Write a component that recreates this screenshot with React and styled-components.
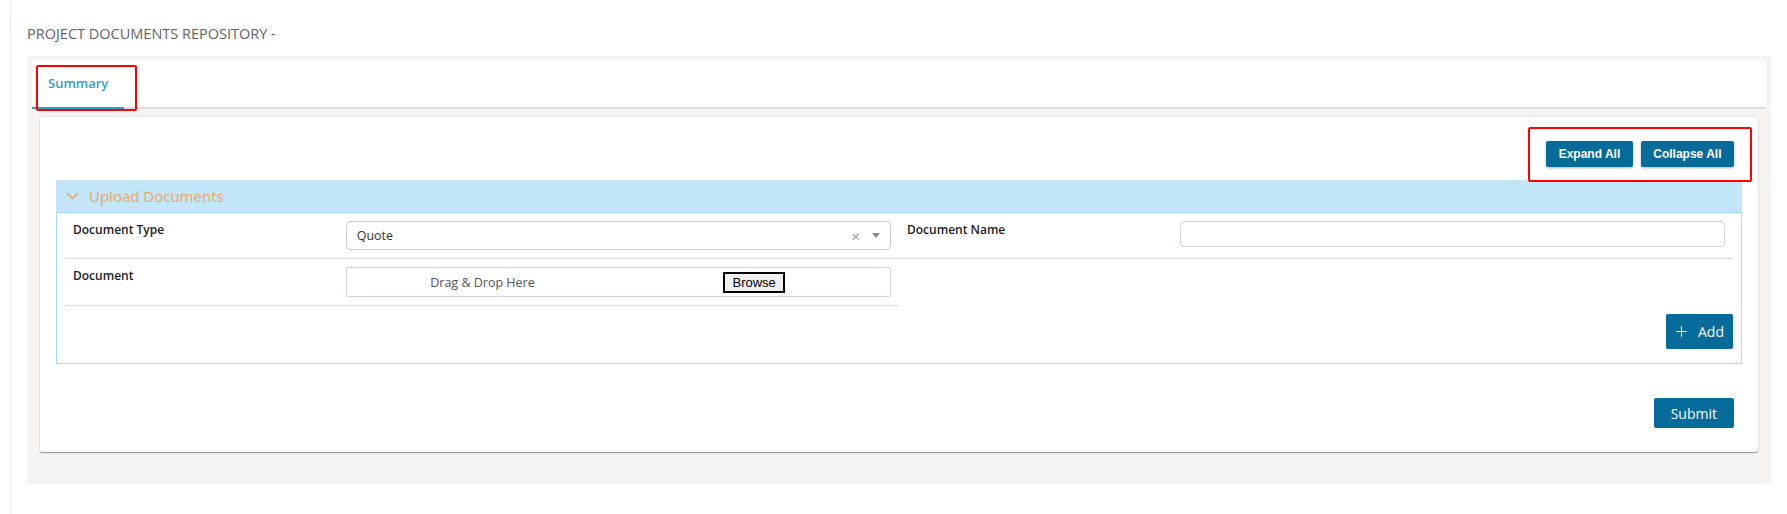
import React from "react";
import styled, { createGlobalStyle } from "styled-components";
import { Plus } from "lucide-react";

const GlobalStyle = createGlobalStyle`
  html, body {
    margin: 0;
    padding: 0;
    background: #fff;
    font-family: "Open Sans", "Noto Sans", sans-serif;
  }
  * {
    box-sizing: border-box;
  }
`;

const Page = styled.div`
  padding-left: 10px;
  min-height: 514px;
  display: flex;
`;
const Shell = styled.div`
  flex: 1;
  border-left: 1px solid #ececec;
  padding: 0 16px;
`;
const PageTitle = styled.div`
  padding-top: 24px;
  margin-bottom: 12px;
  font-size: 14.5px;
  line-height: 20px;
  color: #636363;
  text-transform: uppercase;
`;
const Workspace = styled.div`
  background-color: #f5f4f2;
  padding: 5px 5px 32px;
`;
const TabBar = styled.div`
  display: flex;
  align-items: flex-start;
  height: 48px;
  background-color: #fff;
  border-bottom: 2px solid #dcdde2;
`;
const Tab = styled.div`
  position: relative;
  height: 48px;
  margin-bottom: -2px;
  padding: 13px 16px 0;
  font-size: 13px;
  line-height: 18px;
  font-weight: 600;
  color: ${(p) => (p.$active ? "#3a9ccc" : "#666")};
  border-bottom: 2px solid ${(p) => (p.$active ? "#2d9fc8" : "transparent")};
`;
const Highlight = styled.span`
  position: absolute;
  inset: ${(p) => p.$inset};
  border: 2px solid #ff0000;
  border-radius: 2px;
  pointer-events: none;
`;
const Card = styled.div`
  margin: 8px 8px 0;
  padding: 24px 16px;
  background-color: #fff;
  border-radius: 2px;
  box-shadow: 0 1px 1px rgba(0, 0, 0, 0.35), 0 0 3px rgba(0, 0, 0, 0.1);
`;
const Toolbar = styled.div`
  display: flex;
  justify-content: flex-end;
  padding-right: 8px;
  margin-bottom: 13px;
`;
const ButtonGroup = styled.div`
  position: relative;
  display: flex;
  gap: 8px;
`;
const ToolButton = styled.button`
  height: 26px;
  padding: 0 12.5px;
  border: none;
  border-radius: 2px;
  background-color: #056b9b;
  color: #fff;
  font-family: "Liberation Sans", Arial, sans-serif;
  font-size: 12px;
  font-weight: 700;
  box-shadow: 0 1px 3px rgba(0, 0, 0, 0.3);
`;
const SectionHeader = styled.div`
  display: flex;
  align-items: center;
  gap: 10px;
  height: 32px;
  padding-left: 10px;
  background-color: #c2e6f7;
`;
const SectionTitle = styled.span`
  font-size: 15px;
  color: #f2a45a;
`;
const SectionBody = styled.div`
  border: 1px solid #9edcf7;
`;
const FieldGrid = styled.div`
  display: grid;
  grid-template-columns: 1fr 1fr;
  padding: 0 8px;
`;
const Field = styled.div`
  display: grid;
  grid-template-columns: 1fr 2fr;
  align-items: start;
  padding: 8px;
  border-bottom: 1px solid #dadada;
`;
const Label = styled.div`
  font-size: 12px;
  line-height: 18px;
  font-weight: 600;
  color: #222;
`;
const SelectBox = styled.div`
  display: flex;
  align-items: center;
  height: 29px;
  padding: 0 10px;
  border: 1px solid #ccc;
  border-radius: 4px;
  font-size: 12.5px;
  color: #333;
`;
const SelectControls = styled.div`
  margin-left: auto;
  display: flex;
  align-items: center;
  gap: 12px;
  color: #999;
  font-size: 15px;
`;
const Caret = styled.span`
  width: 0;
  height: 0;
  border-left: 4px solid transparent;
  border-right: 4px solid transparent;
  border-top: 5px solid #8a8a8a;
`;
const TextInput = styled.input`
  width: 100%;
  height: 26px;
  border: 1px solid #cfd4da;
  border-radius: 4px;
  outline: none;
`;
const DropZone = styled.div`
  display: grid;
  grid-template-columns: 1fr 1fr;
  align-items: center;
  height: 30px;
  border: 1px solid #cfd4da;
  border-radius: 2px;
  font-size: 12.5px;
  color: #555;
  text-align: center;
`;
const BrowseButton = styled.button`
  justify-self: center;
  height: 21px;
  padding: 0 7px;
  border: 2px solid #000;
  background-color: #efefef;
  color: #000;
  font-family: "Liberation Sans", Arial, sans-serif;
  font-size: 13px;
`;
const AddRow = styled.div`
  display: flex;
  justify-content: flex-end;
  padding: 8px 8px 14px;
`;
const AddButton = styled.button`
  display: flex;
  align-items: center;
  gap: 8px;
  height: 35px;
  padding: 0 9px 0 7px;
  border: none;
  border-radius: 2px;
  background-color: #056b9b;
  color: #fff;
  font-family: "Open Sans", sans-serif;
  font-size: 14px;
`;
const Footer = styled.div`
  display: flex;
  justify-content: flex-end;
  padding-right: 8px;
  margin-top: 34px;
`;
const SubmitButton = styled.button`
  height: 30px;
  padding: 0 17px;
  border: none;
  border-radius: 2px;
  background-color: #056b9b;
  color: #fff;
  font-family: "Open Sans", sans-serif;
  font-size: 14px;
`;

const Chevron = () => (
  <svg width="13" height="8" viewBox="0 0 13 8">
    <polyline points="1,1 6.5,6.5 12,1" fill="none" stroke="#f2a45a" strokeWidth="1.5" />
  </svg>
);

const App = () => {
  return (
    <Page>
      <GlobalStyle />
      <Shell>
        <PageTitle>Project Documents Repository -</PageTitle>
        <Workspace>
          <TabBar>
            <Tab $active>
              Summary
              <Highlight $inset="4px -13px -4px 4px" />
            </Tab>
          </TabBar>
          <Card>
            <Toolbar>
              <ButtonGroup>
                <ToolButton>Expand All</ToolButton>
                <ToolButton>Collapse All</ToolButton>
                <Highlight $inset="-14px -18px -15px -18px" />
              </ButtonGroup>
            </Toolbar>
            <SectionHeader>
              <Chevron />
              <SectionTitle>Upload Documents</SectionTitle>
            </SectionHeader>
            <SectionBody>
              <FieldGrid>
                <Field>
                  <Label>Document Type</Label>
                  <SelectBox>
                    Quote
                    <SelectControls>
                      <span>×</span>
                      <Caret />
                    </SelectControls>
                  </SelectBox>
                </Field>
                <Field>
                  <Label>Document Name</Label>
                  <TextInput type="text" />
                </Field>
                <Field>
                  <Label>Document</Label>
                  <DropZone>
                    <span>Drag &amp; Drop Here</span>
                    <BrowseButton>Browse</BrowseButton>
                  </DropZone>
                </Field>
              </FieldGrid>
              <AddRow>
                <AddButton>
                  <Plus size={17} strokeWidth={1.6} />
                  Add
                </AddButton>
              </AddRow>
            </SectionBody>
            <Footer>
              <SubmitButton>Submit</SubmitButton>
            </Footer>
          </Card>
        </Workspace>
      </Shell>
    </Page>
  );
};

export default App;
